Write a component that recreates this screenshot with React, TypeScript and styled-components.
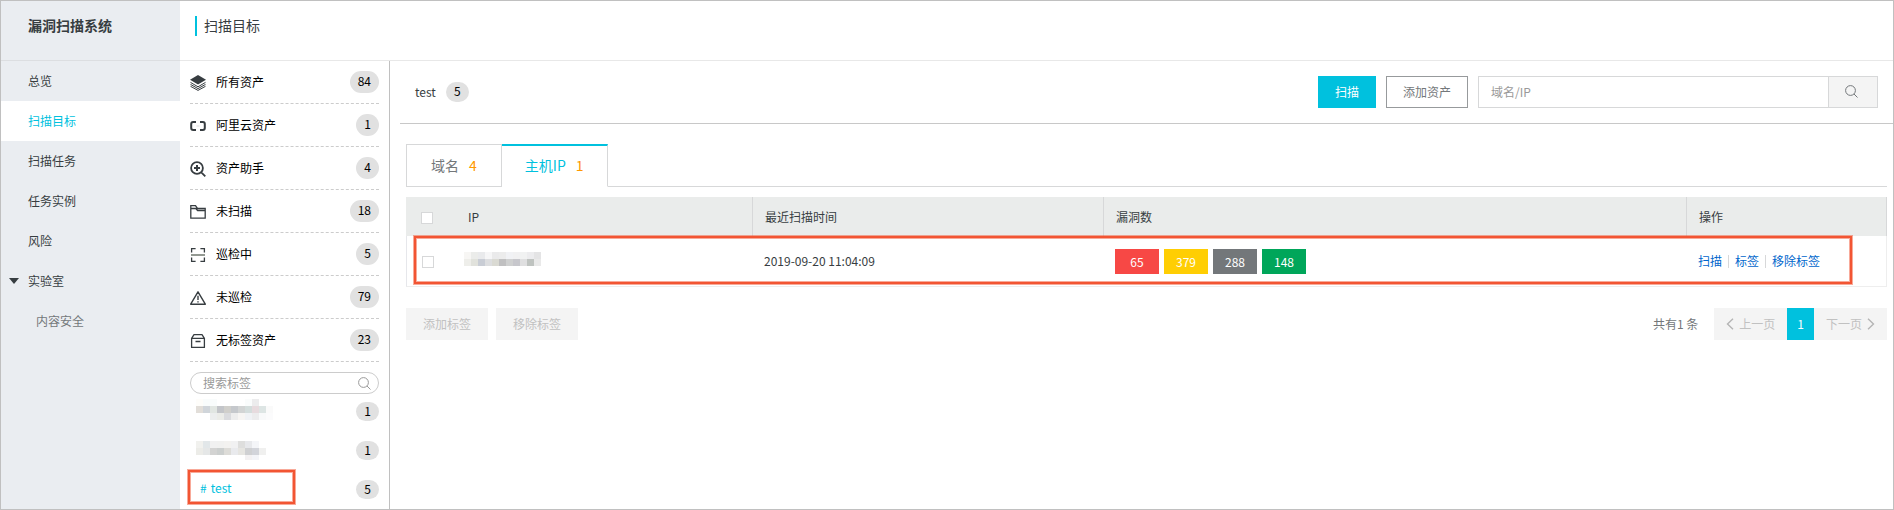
import React from "react";
import styled, { createGlobalStyle, css } from "styled-components";

const color = {
  brand: "#00c1de",
  ink: "#373d41",
  muted: "#73777a",
  faint: "#c1c1c1",
  line: "#d7d8d9",
  frame: "#c0c0c0",
  sidebar: "#eaedf1",
  badge: "#e1e1e1",
  disabled: "#f4f4f4",
  link: "#0066cc",
  mark: "#f25533",
};

const GlobalStyle = createGlobalStyle`
  *, *::before, *::after { box-sizing: border-box; }
  body {
    margin: 0;
    background: #fff;
    color: ${color.ink};
    font: 12px/18px "Noto Sans CJK SC", "Noto Sans", sans-serif;
  }
  button, input { font: inherit; color: inherit; margin: 0; }
  button { padding: 0; border: 0; background: none; }
  a { color: inherit; text-decoration: none; }
  h1, h2, ul, p { margin: 0; padding: 0; font-weight: normal; }
  ul { list-style: none; }
`;

const Frame = styled.div`
  display: flex;
  min-height: 100vh;
  border: 1px solid ${color.frame};
`;

/* Left navigation */

const Sidebar = styled.aside`
  flex: 0 0 179px;
  background: ${color.sidebar};
`;

const SystemName = styled.h1`
  height: 60px;
  padding: 15px 27px 0;
  border-bottom: 1px solid #dcdee1;
  font-size: 14px;
  line-height: 18px;
  font-weight: bold;
`;

const NavItem = styled.a<{ $active?: boolean; $kind?: "group" | "child" }>`
  display: flex;
  align-items: center;
  gap: 9px;
  height: 40px;
  padding-left: ${(p) => (p.$kind === "group" ? 8 : p.$kind === "child" ? 35 : 27)}px;
  color: ${(p) => (p.$active ? color.brand : p.$kind === "child" ? color.muted : color.ink)};
  background: ${(p) => (p.$active ? "#fff" : "transparent")};
`;

/* Page body */

const Page = styled.div`
  flex: 1;
  min-width: 0;
  display: flex;
  flex-direction: column;
`;

const PageHeader = styled.header`
  height: 60px;
  padding: 15px;
  border-bottom: 1px solid #e8e8e8;
`;

const PageTitle = styled.h2`
  padding: 0 0 2px 7px;
  border-left: 2px solid ${color.brand};
  font-size: 14px;
  line-height: 18px;
`;

const Columns = styled.div`
  flex: 1;
  display: flex;
`;

const AssetPanel = styled.section`
  flex: 0 0 210px;
  padding: 0 10px 10px;
  border-right: 1px solid ${color.frame};
`;

const AssetRow = styled.a`
  display: flex;
  align-items: center;
  height: 43px;
  border-bottom: 1px dashed #ccc;
  color: #000;
`;

const AssetIcon = styled.svg`
  width: 16px;
  height: 16px;
  margin: 2px 10px 0 0;
  fill: none;
  stroke: ${color.ink};
`;

const Badge = styled.span<{ $height: number }>`
  min-width: 22px;
  height: ${(p) => p.$height}px;
  margin-left: auto;
  padding: 0 8px;
  border-radius: 11px;
  background: ${color.badge};
  color: #000;
  line-height: ${(p) => p.$height - 2}px;
  text-align: center;
`;

const TagSearch = styled.label`
  display: flex;
  align-items: center;
  height: 22px;
  margin-top: 10px;
  padding: 0 7px 0 12px;
  border: 1px solid #ccc;
  border-radius: 11px;
`;

const TagInput = styled.input`
  flex: 1;
  min-width: 0;
  padding: 0;
  border: 0;
  outline: 0;
  background: none;
  &::placeholder { color: #999; }
`;

const TagList = styled.ul`
  display: flex;
  flex-direction: column;
  gap: 20px;
  margin-top: 8px;
`;

const TagRow = styled.li`
  position: relative;
  display: flex;
  align-items: center;
  height: 19px;
  padding-left: 6px;
`;

const TagLink = styled.a`
  display: flex;
  gap: 4px;
  padding: 0 4px 4px;
  color: ${color.brand};
`;

const marker = css`
  position: absolute;
  border: 2px solid ${color.mark};
  box-shadow: 0 0 0 1px rgba(242, 85, 51, 0.5), inset 0 0 0 1px rgba(242, 85, 51, 0.5);
  pointer-events: none;
`;

const TagMarker = styled.span`
  ${marker}
  top: -10px;
  left: -2px;
  width: 107px;
  height: 34px;
`;

const RowMarker = styled.span`
  ${marker}
  inset: 0 35px 3px 8px;
`;

/* Main area */

const Main = styled.main`
  flex: 1;
  min-width: 0;
`;

const Toolbar = styled.div`
  display: flex;
  align-items: center;
  gap: 10px;
  height: 63px;
  margin-left: 10px;
  padding: 0 15px;
  padding-bottom: 1px;
  border-bottom: 1px solid #c8c8c8;
`;

const CurrentTag = styled.div`
  display: flex;
  align-items: center;
  gap: 10px;
  margin-right: auto;
`;

const Button = styled.button<{ $kind?: "primary" | "outline" | "disabled" }>`
  height: 32px;
  padding: 0 16px;
  border: 1px solid;
  ${(p) =>
    p.$kind === "primary"
      ? css`border-color: ${color.brand}; background: ${color.brand}; color: #fff;`
      : p.$kind === "disabled"
        ? css`border-color: ${color.disabled}; background: ${color.disabled}; color: ${color.faint};`
        : css`border-color: #979a9c; color: ${color.muted};`}
`;

const AssetSearch = styled.form`
  flex: 0 1 400px;
  display: flex;
  height: 32px;
  border: 1px solid ${color.line};
`;

const AssetInput = styled.input`
  flex: 1;
  min-width: 0;
  padding: 0 12px;
  border: 0;
  outline: 0;
  &::placeholder { color: #999; }
`;

const SearchButton = styled.button`
  flex: 0 0 49px;
  display: flex;
  align-items: center;
  justify-content: center;
  padding-right: 4px;
  border-left: 1px solid ${color.line};
  background: ${color.disabled};
`;

const Body = styled.div`
  padding: 20px 6px 0 16px;
`;

const Tabs = styled.div`
  display: flex;
  height: 43px;
  border-bottom: 1px solid ${color.line};
`;

const Tab = styled.button<{ $active?: boolean }>`
  display: flex;
  align-items: center;
  gap: 10px;
  height: 43px;
  padding: 0 24px 2px;
  border: 1px solid ${color.line};
  font-size: 14px;
  color: ${color.muted};
  ${(p) =>
    p.$active &&
    css`
      padding: 0 23px 3px;
      border-top: 2px solid ${color.brand};
      border-bottom-color: #fff;
      border-left: 0;
      color: ${color.brand};
    `}
`;

const TabCount = styled.span`
  color: #f90;
`;

const Table = styled.table`
  width: 100%;
  margin-top: 10px;
  border-collapse: separate;
  border-spacing: 0;
  table-layout: fixed;
`;

const Col = styled.col<{ $width?: number }>`
  width: ${(p) => (p.$width ? `${p.$width}px` : "auto")};
`;

const HeadCell = styled.th<{ $open?: boolean }>`
  height: 39px;
  padding: 0 12px;
  border-right: ${(p) => (p.$open ? 0 : 1)}px solid ${color.line};
  background: #eaeceb;
  font-weight: normal;
  text-align: left;
`;

const DataRow = styled.tr`
  position: relative;
`;

const Cell = styled.td<{ $inset?: number }>`
  height: 51px;
  padding: 0 ${(p) => p.$inset ?? 11}px;
  border-bottom: 1px solid #eee;
  &:first-child { border-left: 1px solid #e6e7eb; }
  &:last-child { border-right: 1px solid #eee; }
`;

const CheckBox = styled.input`
  appearance: none;
  display: block;
  width: 12px;
  height: 12px;
  margin: 2px 0 0 3px;
  border: 1px solid ${color.line};
  background: #fff;
`;

const Levels = styled.div`
  display: flex;
  gap: 5px;
`;

const Level = styled.span<{ $tone: string }>`
  width: 44px;
  background: ${(p) => p.$tone};
  color: #fff;
  line-height: 25px;
  text-align: center;
`;

const Actions = styled.div`
  display: flex;
  align-items: center;
`;

const ActionLink = styled.a`
  color: ${color.link};
  & + & {
    display: flex;
    align-items: center;
  }
  & + &::before {
    content: "";
    width: 1px;
    height: 13px;
    margin: 0 6px;
    background: ${color.line};
  }
`;

const Footer = styled.div`
  display: flex;
  align-items: center;
  gap: 8px;
  margin-top: 21px;
`;

const Total = styled.p`
  margin: 0 8px 0 auto;
  color: ${color.muted};
`;

const Pager = styled.nav`
  display: flex;
`;

const PageButton = styled.button<{ $current?: boolean }>`
  display: flex;
  align-items: center;
  justify-content: center;
  gap: 5px;
  height: 32px;
  padding: 0 ${(p) => (p.$current ? 10 : 12)}px;
  background: ${(p) => (p.$current ? color.brand : color.disabled)};
  color: ${(p) => (p.$current ? "#fff" : color.faint)};
`;

/* Drawings */

const icons: Record<string, React.ReactNode> = {
  layers: (
    <>
      <path d="M8 0 16 4.8 8 9.6 0 4.8Z" fill={color.ink} stroke="none" />
      <path d="M.5 7.4 8 11.8l7.500-4.400M.5 9.400 8 13.600l7.500-4.200M.5 11.300 8 15.400l7.500-4.100" />
    </>
  ),
  cloud: (
    <>
      <path d="M6 3.900H3.200Q1.200 3.900 1.200 5.900v4.200q0 2 2 2H6M10 3.900h2.800q2 0 2 2v4.200q0 2-2 2H10" strokeWidth="2" />
      <path d="M6.500 8h3" stroke="#ddd" />
    </>
  ),
  assistant: (
    <>
      <path d="M7 1.100a5.900 5.900 0 1 0 0 11.800A5.900 5.900 0 1 0 7 1.100ZM11.300 11.300 15.300 15.300" strokeWidth="1.800" />
      <path d="M7 4v6M4 7h6" strokeWidth="2" />
    </>
  ),
  folder: (
    <path d="M.8 1.700h4.700l2 2.800h7.700v9.700H.8ZM.8 4.500h5l1.800 2h7.600" strokeWidth="1.300" />
  ),
  scanning: (
    <>
      <path d="M1.600 5.500V1.600h4M10.400 1.600h4v3.900M1.600 10.500v3.900h4M10.400 14.400h4v-3.900" strokeWidth="1.300" />
      <path d="M1 8h14" stroke="#939992" strokeWidth="2" />
    </>
  ),
  warning: (
    <path d="M8 1.800 15.300 14.200H.7ZM8 5.800v4.200M8 11.200v1.300" strokeWidth="1.400" strokeLinejoin="round" />
  ),
  box: (
    <path d="M1.600 5.300 4 1.600h8l2.400 3.700v9.100H1.600ZM1.600 5.300h12.800M5.500 8.500h5" strokeWidth="1.300" strokeLinejoin="round" />
  ),
};

const SearchIcon = ({ tint }: { tint: string }) => (
  <svg width="13" height="13" viewBox="0 0 13 13" fill="none" stroke={tint} aria-hidden="true">
    <circle cx="5.500" cy="5.500" r="4.900" />
    <path d="m9 9 3.500 3.500" />
  </svg>
);

const Arrow = ({ d }: { d: string }) => (
  <svg width="8" height="12" viewBox="0 0 8 12" fill="none" stroke="#b5b5b5" strokeWidth="1.400" aria-hidden="true">
    <path d={d} />
  </svg>
);

const CELL = 7;

/* Pixelated cover for names and addresses that stay private */
const Mosaic = ({ rows, height }: { rows: string[][]; height: number }) => (
  <svg width={77} height={height} aria-hidden="true" style={{ display: "block" }}>
    {rows.map((row, y) =>
      row.map((tone, x) => (
        <rect key={`${x}-${y}`} x={x * CELL} y={y * CELL} width={CELL} height={CELL} fill={`#${tone}`} />
      ))
    )}
  </svg>
);

const maskedTags = [
  {
    height: 25,
    rows: [
      ["fefdfa", "f9fcfc", "f9fcfc", "fff", "fff", "fff", "fff", "fafcfc", "ececed", "fff", "fff"],
      ["e2ded9", "d0d5da", "e1e6e2", "c3c5c9", "d0cfcb", "c5c8cc", "d2d4d4", "d4dddc", "e7dbde", "dde5e4", "fafafa"],
      ["fff", "fff", "eceeee", "ebece8", "dadbde", "ededed", "f7f5f3", "f0f2f5", "ececed", "f8f9fa", "fbfbfc"],
    ],
  },
  {
    height: 19,
    rows: [
      ["f1f1ee", "e2e7e9", "f1f1f1", "f1f1f0", "f3f2f0", "f1f1f2", "dededd", "e7e8eb", "f4f5f8", "fff"],
      ["ecece8", "e5e7e7", "d3d3d2", "cccfce", "dddcd8", "e9eaed", "e6e5e1", "cfd0d2", "d2d4da", "f0f0ef"],
      ["fff", "fff", "fff", "fff", "fff", "fff", "fff", "f3f1f2", "f3f4f8", "fff"],
    ],
  },
];

const maskedAddress = [
  ["f7f6f4", "ebecea", "e9eaec", "f6f6f7", "eaeaeb", "ececec", "f1f2f5", "f1f1f2", "f1f2f2", "ececee", "e4e4e5"],
  ["eeeeea", "e1e2dc", "c9cdd5", "dddee0", "dadad3", "c0c0c1", "cfd0d0", "c7c7cc", "dfdfe0", "bfc3c0", "e9e9e9"],
];

/* Data */

const assets = [
  { icon: "layers", name: "所有资产", count: 84 },
  { icon: "cloud", name: "阿里云资产", count: 1 },
  { icon: "assistant", name: "资产助手", count: 4 },
  { icon: "folder", name: "未扫描", count: 18 },
  { icon: "scanning", name: "巡检中", count: 5 },
  { icon: "warning", name: "未巡检", count: 79 },
  { icon: "box", name: "无标签资产", count: 23 },
];

const levels = [
  { tone: "#f74845", count: 65 },
  { tone: "#ffce03", count: 379 },
  { tone: "#73777a", count: 288 },
  { tone: "#00a65a", count: 148 },
];

export default function App() {
  return (
    <>
      <GlobalStyle />
      <Frame>
        <Sidebar>
          <SystemName>漏洞扫描系统</SystemName>
          <nav>
            <NavItem href="#overview">总览</NavItem>
            <NavItem href="#targets" $active aria-current="page">扫描目标</NavItem>
            <NavItem href="#tasks">扫描任务</NavItem>
            <NavItem href="#instances">任务实例</NavItem>
            <NavItem href="#risks">风险</NavItem>
            <NavItem href="#lab" $kind="group">
              <svg width="10" height="6" viewBox="0 0 10 6" aria-hidden="true">
                <path d="M0 0h10L5 6Z" fill={color.ink} />
              </svg>
              实验室
            </NavItem>
            <NavItem href="#content" $kind="child">内容安全</NavItem>
          </nav>
        </Sidebar>
        <Page>
          <PageHeader>
            <PageTitle>扫描目标</PageTitle>
          </PageHeader>
          <Columns>
            <AssetPanel>
              {assets.map((a) => (
                <AssetRow key={a.icon} href={`#${a.icon}`}>
                  <AssetIcon viewBox="0 0 16 16" aria-hidden="true">{icons[a.icon]}</AssetIcon>
                  {a.name}
                  <Badge $height={22}>{a.count}</Badge>
                </AssetRow>
              ))}
              <TagSearch>
                <TagInput type="text" placeholder="搜索标签" aria-label="搜索标签" />
                <SearchIcon tint="#999" />
              </TagSearch>
              <TagList>
                {maskedTags.map((t, i) => (
                  <TagRow key={i}>
                    <Mosaic rows={t.rows} height={t.height} />
                    <Badge $height={19}>1</Badge>
                  </TagRow>
                ))}
                <TagRow>
                  <TagLink href="#test"><span>#</span><span>test</span></TagLink>
                  <Badge $height={19}>5</Badge>
                  <TagMarker />
                </TagRow>
              </TagList>
            </AssetPanel>
            <Main>
              <Toolbar>
                <CurrentTag>
                  test
                  <Badge $height={20}>5</Badge>
                </CurrentTag>
                <Button type="button" $kind="primary">扫描</Button>
                <Button type="button" $kind="outline">添加资产</Button>
                <AssetSearch onSubmit={(e) => e.preventDefault()}>
                  <AssetInput type="text" placeholder="域名/IP" aria-label="域名/IP" />
                  <SearchButton type="submit" aria-label="搜索">
                    <SearchIcon tint={color.muted} />
                  </SearchButton>
                </AssetSearch>
              </Toolbar>
              <Body>
                <Tabs role="tablist">
                  <Tab type="button" role="tab" aria-selected="false">
                    域名 <TabCount>4</TabCount>
                  </Tab>
                  <Tab type="button" role="tab" aria-selected="true" $active>
                    主机IP <TabCount>1</TabCount>
                  </Tab>
                </Tabs>
                <Table>
                  <colgroup>
                    <Col $width={50} />
                    <Col $width={297} />
                    <Col $width={351} />
                    <Col />
                    <Col $width={200} />
                  </colgroup>
                  <thead>
                    <tr>
                      <HeadCell $open><CheckBox type="checkbox" aria-label="全选" /></HeadCell>
                      <HeadCell>IP</HeadCell>
                      <HeadCell>最近扫描时间</HeadCell>
                      <HeadCell>漏洞数</HeadCell>
                      <HeadCell>操作</HeadCell>
                    </tr>
                  </thead>
                  <tbody>
                    <DataRow>
                      <Cell $inset={12}>
                        <CheckBox type="checkbox" aria-label="选择" />
                        <RowMarker />
                      </Cell>
                      <Cell $inset={8}><Mosaic rows={maskedAddress} height={18} /></Cell>
                      <Cell>2019-09-20 11:04:09</Cell>
                      <Cell>
                        <Levels>
                          {levels.map((l) => (
                            <Level key={l.tone} $tone={l.tone}>{l.count}</Level>
                          ))}
                        </Levels>
                      </Cell>
                      <Cell>
                        <Actions>
                          <ActionLink href="#scan">扫描</ActionLink>
                          <ActionLink href="#tag">标签</ActionLink>
                          <ActionLink href="#untag">移除标签</ActionLink>
                        </Actions>
                      </Cell>
                    </DataRow>
                  </tbody>
                </Table>
                <Footer>
                  <Button type="button" $kind="disabled" disabled>添加标签</Button>
                  <Button type="button" $kind="disabled" disabled>移除标签</Button>
                  <Total>共有1 条</Total>
                  <Pager aria-label="分页">
                    <PageButton type="button" disabled>
                      <Arrow d="M7 .7 1.500 6 7 11.300" />
                      上一页
                    </PageButton>
                    <PageButton type="button" $current aria-current="page">1</PageButton>
                    <PageButton type="button" disabled>
                      下一页
                      <Arrow d="M1 .7 6.500 6 1 11.300" />
                    </PageButton>
                  </Pager>
                </Footer>
              </Body>
            </Main>
          </Columns>
        </Page>
      </Frame>
    </>
  );
}
